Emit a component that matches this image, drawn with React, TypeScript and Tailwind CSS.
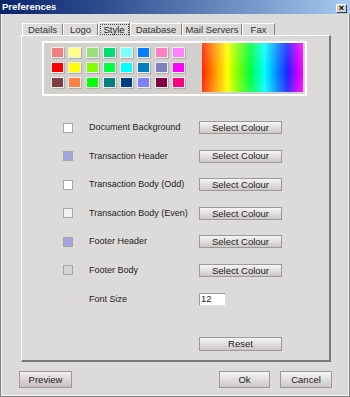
import React from "react";

const palette = [
  ["#f08080", "#ffff80", "#99e07a", "#00e070", "#80ffff", "#0080ff", "#ff80c0", "#ff80ff"],
  ["#ff0000", "#ffff00", "#80ff00", "#00ff40", "#00ffff", "#0080c0", "#8080c0", "#ff00ff"],
  ["#804040", "#ff8040", "#00ff00", "#008080", "#004080", "#8080ff", "#800040", "#ff0080"],
];

function Btn({ children, w, tone = "plain" }: { children: React.ReactNode; w: string; tone?: "plain" | "pink" }) {
  const bg =
    tone === "pink"
      ? "bg-[linear-gradient(to_bottom,#f2eded,#c9bebe)]"
      : "bg-[linear-gradient(to_bottom,#f6f4f4,#cdc8c8)]";
  return (
    <div
      className={`${w} ${bg} h-full border border-[#9a9a9a] flex items-center justify-center text-[9.5px] text-[#222] leading-none`}
    >
      {children}
    </div>
  );
}

function Row({ color, label }: { color: string; label: string }) {
  return (
    <div className="flex items-center h-[13px] pl-[41px]">
      <div className="w-[10px] h-[10px] border border-[#a8a8a8]" style={{ backgroundColor: color }} />
      <div className="ml-[16px] w-[110px] text-[9px] text-[#222] leading-none">{label}</div>
      <div className="h-[13px]">
        <Btn w="w-[83px]">Select Colour</Btn>
      </div>
    </div>
  );
}

const tabs = [
  { name: "Details", w: "w-[41px]" },
  { name: "Logo", w: "w-[35px]" },
  { name: "Style", w: "w-[32px]", sel: true },
  { name: "Database", w: "w-[52px]" },
  { name: "Mail Servers", w: "w-[60px]" },
  { name: "Fax", w: "w-[33px]" },
];

export default function App() {
  return (
    <div
      className="w-[350px] h-[397px] bg-[#dcdbd9] flex flex-col overflow-hidden"
      style={{ fontFamily: '"Liberation Sans", Arial, sans-serif' }}
    >
      {/* title bar */}
      <div className="h-[14px] shrink-0 bg-[linear-gradient(to_right,#0a246a,#2e4e90_30%,#a6caf0)] flex items-center justify-between pl-[2px] pr-[3px]">
        <span className="text-white font-bold text-[9.5px] leading-none">Preferences</span>
        <div className="w-[11px] h-[9px] bg-[#d4d0c8] border border-t-white border-l-white border-r-[#404040] border-b-[#404040] flex items-center justify-center text-[9px] leading-none text-black font-bold mt-[2px]">
          ×
        </div>
      </div>

      {/* window frame */}
      <div className="flex-1 flex flex-col border-x border-b border-[#808080]">
        <div className="flex-1 flex flex-col border-x border-b border-white/70 pl-[17px] pr-[16px]">
          {/* tabs */}
          <div className="flex items-end h-[13px] mt-[8px] ml-[3px]">
            {tabs.map((t) =>
              t.sel ? (
                <div
                  key={t.name}
                  className={`${t.w} h-[14px] -mb-px relative z-10 bg-[#dcdbd9] border-t border-l border-white border-r border-r-[#808080] flex items-center justify-center`}
                >
                  <span className="border border-dotted border-[#444] w-[29px] h-[11px] flex items-center justify-center text-[9.5px] leading-none text-[#222]">
                    {t.name}
                  </span>
                </div>
              ) : (
                <div
                  key={t.name}
                  className={`${t.w} h-[12px] border-t border-l border-white border-r border-r-[#808080] flex items-center justify-center text-[9.5px] leading-none text-[#333]`}
                >
                  {t.name}
                </div>
              )
            )}
          </div>

          {/* panel */}
          <div className="ml-[2px] w-[310px] h-[327px] shrink-0 border-l border-t border-white border-r-2 border-b-2 border-r-[#7a7a7a] border-b-[#7a7a7a] flex flex-col">
            {/* palette */}
            <div className="ml-[20px] mt-[5px] w-[265px] h-[55px] border-2 border-white bg-[#d2d0cc] flex">
              <div className="ml-[7px] mt-[4px] flex flex-col gap-[4px]">
                {palette.map((row, i) => (
                  <div key={i} className="flex gap-[4.3px]">
                    {row.map((c, j) => (
                      <div
                        key={j}
                        className="w-[13px] h-[11px] border border-[#eeeeee] shadow-[1px_1px_0_#b0b0b0]"
                        style={{ backgroundColor: c }}
                      />
                    ))}
                  </div>
                ))}
              </div>
              <div className="ml-[17px] mt-[0px] w-[101px] h-[49px] relative bg-[linear-gradient(to_right,#ff2000,#ff9000_12%,#ffff00_25%,#80ff00_35%,#00ff40_48%,#00ffff_62%,#0080ff_75%,#2020ff_85%,#b000ff_93%,#ff00ff)]">
                <div className="absolute inset-0 bg-[linear-gradient(to_bottom,rgba(255,255,255,0.15),rgba(255,255,255,0)_60%,rgba(255,255,255,0.1))]" />
              </div>
            </div>

            {/* rows */}
            <div className="mt-[25px] flex flex-col gap-[15.6px]">
              <Row color="#ffffff" label="Document Background" />
              <Row color="#a4a4e4" label="Transaction Header" />
              <Row color="#ffffff" label="Transaction Body (Odd)" />
              <Row color="#f2f2f2" label="Transaction Body (Even)" />
              <Row color="#a4a4e4" label="Footer Header" />
              <Row color="#d6d6d6" label="Footer Body" />
              <div className="flex items-center h-[13px] pl-[41px]">
                <div className="w-[10px] h-[10px]" />
                <div className="ml-[16px] w-[110px] text-[9px] text-[#222] leading-none">Font Size</div>
                <div className="w-[27px] h-[13px] bg-white border border-t-[#9a9a9a] border-l-[#9a9a9a] border-r-[#e0e0e0] border-b-[#e0e0e0] text-[9.5px] leading-none text-[#222] flex items-center pl-[1px]">
                  12
                </div>
              </div>
            </div>

            <div className="mt-[31px] ml-[177px] h-[14px]">
              <Btn w="w-[83px]">Reset</Btn>
            </div>
          </div>

          {/* bottom buttons */}
          <div className="flex h-[17px] mt-[9px]">
            <div className="h-full">
              <Btn w="w-[53px]" tone="pink">Preview</Btn>
            </div>
            <div className="flex-1" />
            <div className="h-full">
              <Btn w="w-[51px]">Ok</Btn>
            </div>
            <div className="h-full ml-[10px]">
              <Btn w="w-[52px]">Cancel</Btn>
            </div>
          </div>
        </div>
      </div>
    </div>
  );
}
